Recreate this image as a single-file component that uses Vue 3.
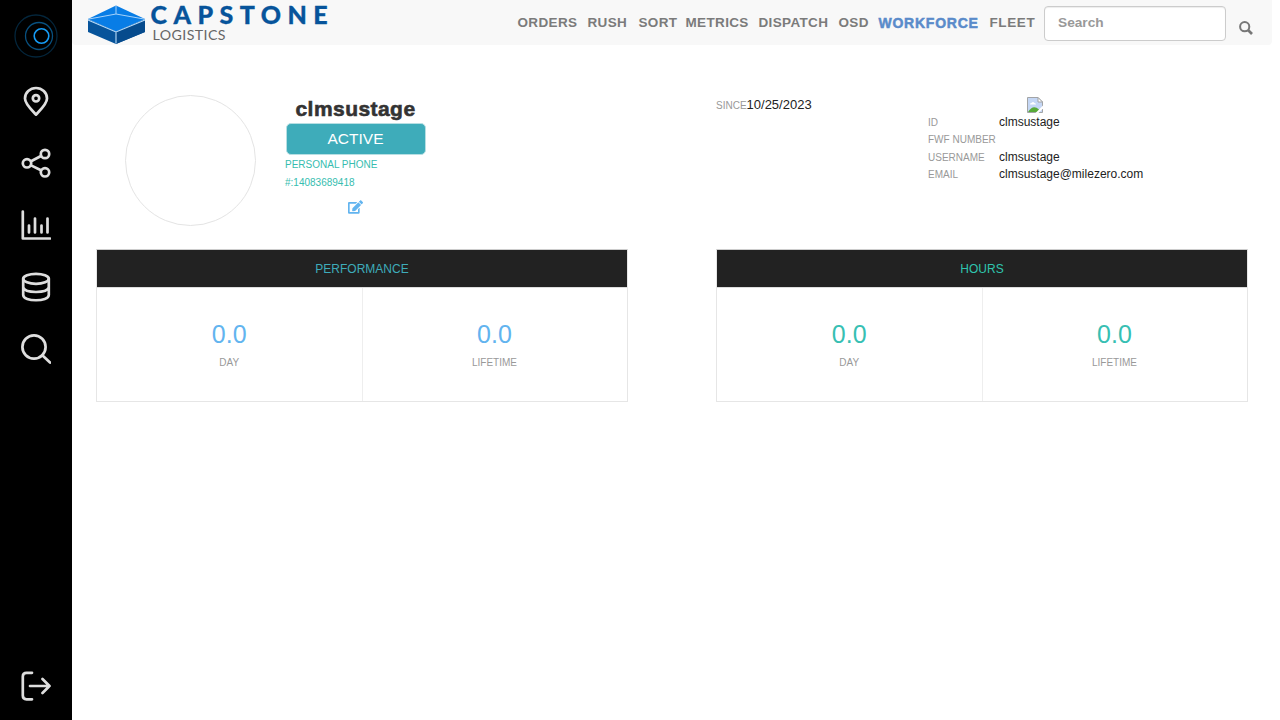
<script setup>
const nav = [
  { label: 'ORDERS', cls: 'orders' },
  { label: 'RUSH', cls: 'rush' },
  { label: 'SORT', cls: 'sort' },
  { label: 'METRICS', cls: 'metrics' },
  { label: 'DISPATCH', cls: 'dispatch' },
  { label: 'OSD', cls: 'osd' },
  { label: 'WORKFORCE', cls: 'workforce' },
  { label: 'FLEET', cls: 'fleet' }
]
const details = [
  ['ID', 'clmsustage'],
  ['FWF NUMBER', ''],
  ['USERNAME', 'clmsustage'],
  ['EMAIL', 'clmsustage@milezero.com']
]
const panels = [
  { title: 'PERFORMANCE', cls: 'performance' },
  { title: 'HOURS', cls: 'hours' }
]
</script>

<template>
  <div class="page">
    <aside class="sidebar">
      <svg class="brand" viewBox="0 0 44 44">
        <circle cx="22" cy="22" r="21" stroke="#04263c" />
        <circle cx="25" cy="22" r="13.5" stroke="#08507f" />
        <circle cx="27.5" cy="22" r="7.3" stroke="#169cf5" stroke-width="1.6" />
      </svg>
      <svg class="icon" viewBox="0 0 30 30">
        <path d="M15 28.700C13 26 4 18.500 4 12.500a11 10.500 0 0 1 22 0C26 18.500 17 26 15 28.700Z" />
        <circle cx="15" cy="12.300" r="3.200" />
      </svg>
      <svg class="icon" viewBox="0 0 30 30">
        <circle cx="6" cy="15.300" r="4.200" /><circle cx="24" cy="6" r="4.200" /><circle cx="24" cy="24.300" r="4.200" />
        <path d="M10 13.200 20 8M10 17.400 20 22.300" />
      </svg>
      <svg class="icon" viewBox="0 0 30 30">
        <path d="M1.800 1.500V28.500H29M8 15.500V22.500M14 8.500V22.500M20.500 15.500V22.500M26.500 8.500V22.500" />
      </svg>
      <svg class="icon" viewBox="0 0 30 30">
        <ellipse cx="15" cy="6.800" rx="12.800" ry="5" />
        <path d="M2.200 6.800V23C2.200 30 27.800 30 27.800 23V6.800M2.200 15.500C4 21.500 26 21.500 27.800 15.500" />
      </svg>
      <svg class="icon" viewBox="0 0 30 30">
        <circle cx="13" cy="13" r="11.600" /><path d="M21.300 21.300 29 28.500" />
      </svg>
      <svg class="icon logout" viewBox="0 0 30 30">
        <path d="M11 1.800H5.500Q1.800 1.800 1.800 5.500V24.500Q1.800 28.300 5.500 28.300H11M9 15H28.500M21.500 8 28.500 15 21.500 22" />
      </svg>
    </aside>

    <div class="content">
      <header class="topbar">
        <svg class="logo" viewBox="0 0 256 44">
          <path d="M16 19 44 31 73 19V32L44 44 16 32Z" fill="#07549b" />
          <path d="M44 5.500 73 19 44 31.500 16 19Z" fill="#087de6" />
          <path d="M44 32 73 20V32L44 44Z" fill="#064b8d" />
          <path d="M16 19.200 44 14 73 19.200M44 6V14" fill="none" stroke="#a5d2fa" />
          <path d="M16 20 44 32 73 20M44 32V43.500" fill="none" stroke="#b9dcfa" stroke-width="1.100" />
          <text class="word" x="78.500" y="24" textLength="177">CAPSTONE</text>
          <text class="sub" x="80.500" y="40" textLength="73">LOGISTICS</text>
        </svg>
        <nav>
          <a v-for="n in nav" :key="n.label" :class="n.cls"><span>{{ n.label }}</span></a>
        </nav>
        <input type="text" placeholder="Search">
        <svg class="find" viewBox="0 0 14 14"><circle cx="5.700" cy="5.700" r="4.600" /><path d="M9 9 13 13" stroke-width="2.600" /></svg>
      </header>

      <section class="profile">
        <div class="avatar"></div>
        <div class="identity">
          <h1><span>clmsustage</span></h1>
          <div class="status">ACTIVE</div>
          <div class="phone">PERSONAL PHONE<br>#:14083689418</div>
          <svg class="edit" viewBox="0 0 576 512"><path fill="#62b4ef" d="M402.600 83.200l90.200 90.200c3.800 3.800 3.800 10 0 13.800L274.400 405.600l-92.800 10.300c-12.400 1.400-22.900-9.100-21.500-21.500l10.300-92.800L388.800 83.200c3.800-3.800 10-3.800 13.800 0zm162-22.900l-48.800-48.800c-15.200-15.200-39.900-15.200-55.200 0l-35.400 35.400c-3.800 3.800-3.800 10 0 13.800l90.200 90.200c3.800 3.800 10 3.800 13.800 0l35.400-35.400c15.200-15.300 15.200-40 0-55.200zM384 346.200V448H64V128h229.800c3.200 0 6.200-1.300 8.500-3.500l40-40c7.600-7.600 2.200-20.500-8.500-20.500H48C21.500 64 0 85.500 0 112v352c0 26.500 21.500 48 48 48h352c26.500 0 48-21.500 48-48V306.200c0-10.700-12.900-16-20.500-8.500l-40 40c-2.200 2.300-3.500 5.300-3.500 8.500z" /></svg>
        </div>
        <div class="since"><small>SINCE</small><span>10/25/2023</span></div>
        <div class="details">
          <svg class="missing" viewBox="0 0 16 16">
            <path d="M.5.500H11L15.500 5V15.500H.5Z" fill="#c5d7f5" stroke="#a2a4a6" />
            <path d="M11 .5V5H15.500Z" fill="#fff" stroke="#a2a4a6" />
            <path d="M3 7.500Q3 5.800 4.700 5.800Q6 4 7.500 6Q9 6 9 7.500Z" fill="#fff" />
            <path d="M1 15Q6 7 12 12.500V15Z" fill="#58aa38" />
            <path d="M8.500 16 16 8.500V11.500L11.500 16Z" fill="#fff" />
          </svg>
          <dl>
            <template v-for="d in details" :key="d[0]"><dt>{{ d[0] }}</dt><dd>{{ d[1] }}</dd></template>
          </dl>
        </div>
      </section>

      <section class="panels">
        <article v-for="p in panels" :key="p.title" :class="['panel', p.cls]">
          <h2>{{ p.title }}</h2>
          <div class="stats">
            <div v-for="l in ['DAY', 'LIFETIME']" :key="l" class="stat"><strong>0.0</strong><small>{{ l }}</small></div>
          </div>
        </article>
      </section>
    </div>
  </div>
</template>

<style>
body { background: #fff; overflow: hidden; }
</style>
<style scoped>
* { box-sizing: border-box; }
.page { display: flex; width: 1280px; height: 720px; font-family: "Liberation Sans", Arial, sans-serif; color: #222; }
.sidebar { width: 72px; height: 720px; background: #000; display: flex; flex-direction: column; align-items: center; padding: 14px 0 19px; }
.brand { width: 44px; height: 44px; fill: none; stroke-width: 1.3; margin-bottom: 28px; flex: none; }
.icon { width: 30px; height: 30px; margin-bottom: 32px; flex: none; fill: none; stroke: #dedede; stroke-width: 2.7; stroke-linecap: round; stroke-linejoin: round; }
.logout { margin-top: auto; margin-bottom: 0; }
.content { flex: 1; min-width: 0; }
.topbar { width: 1200px; height: 44.5px; display: flex; background: #f8f8f8; border-radius: 0 0 4px 4px; }
.logo { width: 256px; height: 44px; flex: none; }
.word { font: 900 25px Lato, sans-serif; fill: #07549b; stroke: #07549b; stroke-width: .3px; }
.sub { font: 400 14.200px Lato, sans-serif; fill: #666; }
nav { display: flex; margin-left: 189.500px; height: 45px; font-size: 13.500px; line-height: 46px; letter-spacing: .35px; font-weight: 700; color: #7b7b7b; white-space: nowrap; }
nav a { flex: none; }
.orders { width: 70px; }
.rush { width: 51px; }
.sort { width: 47px; }
.metrics { width: 73px; }
.dispatch { width: 80px; }
.osd { width: 40px; }
.workforce { width: 111px; color: #5a8bca; font-size: 14px; letter-spacing: .75px; -webkit-text-stroke: .5px #5a8bca; }
.fleet { width: 54.500px; letter-spacing: .6px; }
input { width: 182px; height: 35px; margin-top: 6px; border: 1px solid #ccc; border-radius: 4px; padding: 0 13px 2px; background: #fff; box-shadow: inset 0 1px 1px rgba(0,0,0,.075); font: 700 13.700px "Liberation Sans", Arial, sans-serif; }
input::placeholder { color: #999; opacity: 1; }
.find { width: 14px; height: 14px; margin: 21px 0 0 13px; fill: none; stroke: #777; stroke-width: 2; }
.profile { display: flex; height: 204.500px; padding: 50.500px 0 0 53px; }
.avatar { width: 131px; height: 131px; border: 1px solid #e4e4e4; border-radius: 50%; flex: none; }
.identity { width: 140px; margin-left: 29.500px; display: flex; flex-direction: column; align-items: center; }
h1 { margin: 0; height: 27.500px; font-size: 21px; line-height: 27.500px; color: #333; letter-spacing: .45px; -webkit-text-stroke: .6px #333; }
.status { width: 140px; height: 32px; flex: none; border: 1px solid #b7dfe3; border-radius: 5px; background: #3eacba; color: #fff; text-align: center; font-size: 15.500px; line-height: 29px; }
.phone { width: 140px; font-size: 10px; line-height: 18px; color: #36bdaf; padding-top: 1px; }
.phone { margin-left: -1px; }
.edit { width: 15px; height: 14px; margin: 8px 1px 0 0; flex: none; }
.since { width: 212px; margin-left: 290.500px; height: 20px; line-height: 19px; font-size: 13px; white-space: nowrap; }
.since small { font-size: 10px; color: #999; }
.details { width: 232px; display: flex; flex-direction: column; padding-top: 2px; }
.missing { width: 16px; height: 16px; margin-left: 99px; flex: none; }
dl { margin: 0; display: grid; grid-template-columns: 71px 1fr; grid-auto-rows: 17.400px; white-space: nowrap; }
dt { font-size: 10px; color: #999; line-height: 19px; }
dd { margin: 0; font-size: 12px; line-height: 18px; }
.panels { display: flex; gap: 88px; padding-left: 24px; }
.panel { width: 532px; height: 153px; border: 1px solid #e6e6e6; border-top-color: #ccc; }
h2 { margin: 0; height: 38px; background: #222; border-bottom: 1px solid #ddd; text-align: center; font-size: 12px; line-height: 38px; font-weight: 400; }
.performance h2 { color: #3eacba; }
.hours h2 { color: #2fc5ae; }
.stats { display: flex; }
.stat { width: 265px; height: 113px; text-align: center; display: flex; flex-direction: column; }
.stat:first-child { width: 264.500px; }
.stat + .stat { border-left: 1px solid #eee; }
.stat strong { font-size: 25px; font-weight: 400; line-height: 28px; margin-top: 32px; color: #62b4ef; }
.hours strong { color: #37bfb3; }
.stat small { font-size: 10px; line-height: 12px; margin-top: 9px; color: #999; }
</style>
